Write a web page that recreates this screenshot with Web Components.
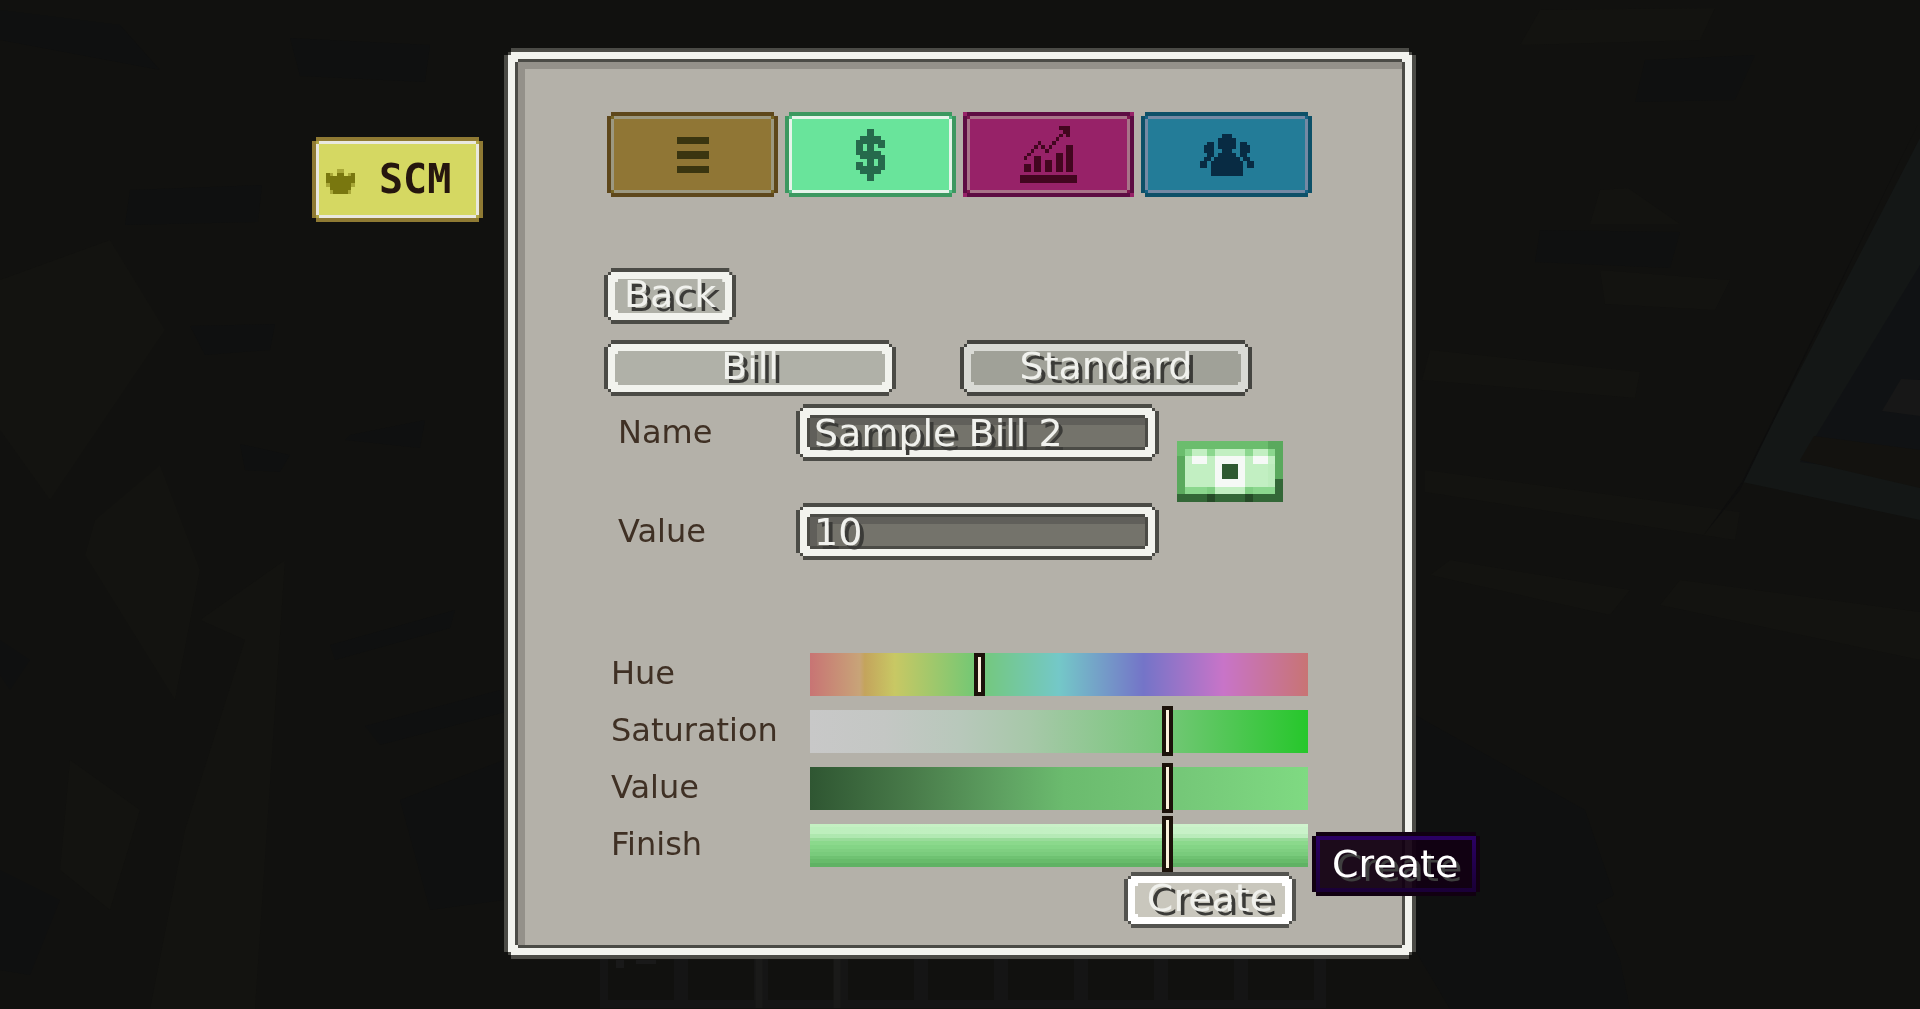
<!DOCTYPE html>
<html lang="en">
<head>
<meta charset="utf-8">
<title>SCM</title>
<style>
  html {
    min-height: 100%;
    background: #11110f;
  }
  body {
    margin: 0;
    overflow: hidden;
    font-family: "DejaVu Sans", sans-serif;
  }
</style>
</head>
<body>
<mint-screen></mint-screen>

<script>
(function() {
  // Rectangle with a square of n px cut from every corner
  const notch = (n) => `polygon(
    ${n}px 0, calc(100% - ${n}px) 0, calc(100% - ${n}px) ${n}px, 100% ${n}px,
    100% calc(100% - ${n}px), calc(100% - ${n}px) calc(100% - ${n}px), calc(100% - ${n}px) 100%, ${n}px 100%,
    ${n}px calc(100% - ${n}px), 0 calc(100% - ${n}px), 0 ${n}px, ${n}px ${n}px)`;

  // Same, but the corner goes down in two steps
  const stairs = `polygon(
    7px 0, calc(100% - 7px) 0, calc(100% - 7px) 4px, calc(100% - 4px) 4px, calc(100% - 4px) 7px, 100% 7px,
    100% calc(100% - 7px), calc(100% - 4px) calc(100% - 7px), calc(100% - 4px) calc(100% - 4px),
    calc(100% - 7px) calc(100% - 4px), calc(100% - 7px) 100%, 7px 100%,
    7px calc(100% - 4px), 4px calc(100% - 4px), 4px calc(100% - 7px), 0 calc(100% - 7px),
    0 7px, 4px 7px, 4px 4px, 7px 4px)`;

  // All layers share one grid cell and paint in source order
  const frameCss = `
    .frame { display: grid; }
    .frame > * { grid-area: 1 / 1; min-width: 0; z-index: 0; }
    .frame > .body { z-index: 1; }
    .edge { background: var(--edge, #4b4b46); clip-path: ${stairs}; }
    .rim { background: var(--rim, #f2f3ee); margin: 4px; }
    .line { background: var(--edge, #4b4b46); margin: 11px; clip-path: ${notch(3)}; }
    .face { background: var(--face, #b4b1a9); margin: 11px; clip-path: ${notch(3)}; }
    .well { background: var(--face, #b4b1a9); margin: 14px; box-shadow: inset 7px 7px 0 var(--shade, #94918a); }
    .rim { clip-path: ${notch(3)}; }
  `;

  // Bitmap rows to svg: each character is looked up in the palette
  function pixels(rows, width, height, palette) {
    let out = '';
    rows.forEach((row, y) => {
      for (let x = 0; x < row.length;) {
        const c = row[x];
        let end = x;
        while (end < row.length && row[end] === c) end++;
        if (palette[c]) {
          out += `<rect x="${x}" y="${y}" width="${end - x}" height="1" fill="${palette[c]}"/>`;
        }
        x = end;
      }
    });
    return `<svg width="${width}" height="${height}" viewBox="0 0 ${rows[0].length} ${rows.length}"
      preserveAspectRatio="none" shape-rendering="crispEdges" aria-hidden="true">${out}</svg>`;
  }

  const icons = {
    menu: pixels(['#', '.', '#', '.', '#'], 32, 36, { '#': '#3a3510' }),
    dollar: pixels([
      '...##...',
      '...##...',
      '.######.',
      '########',
      '##.##.##',
      '##.##...',
      '#######.',
      '.#######',
      '...##.##',
      '##.##.##',
      '########',
      '.######.',
      '...##...',
      '...##...'
    ], 29, 52, { '#': '#266a4c' }),
    chart: pixels([
      '...........###..',
      '............##..',
      '...........#.#..',
      '..........#.....',
      '.....#...#......',
      '....#.#.#....##.',
      '...#...#.....##.',
      '..#.......##.##.',
      '.#..##....##.##.',
      '....##.##.##.##.',
      '.##.##.##.##.##.',
      '.##.##.##.##.##.',
      '................',
      '################',
      '################'
    ], 57, 57, { '#': '#42061f' }),
    people: pixels([
      '......###......',
      '.....#####.....',
      '..##.#####.##..',
      '.###.#####.###.',
      '.###..###..###.',
      '..##.#####.##..',
      '.##.#######.##.',
      '##.#########.##',
      '##.#########.##',
      '...#########...',
      '...#########...'
    ], 54, 42, { '#': '#082b43' }),
    crown: pixels([
      '...oo...',
      '#o.##.o#',
      '########',
      '########',
      'o######o',
      '.######.',
      '.o####o.'
    ], 29, 25, { '#': '#79770f', 'o': '#a9a838' })
  };

  const billArt = pixels([
    'bbbbbbbbbbbbcc',
    'bdeedeeeedeedc',
    'cewwewwwwewwec',
    'ceeeewkkweeefc',
    'ceeeewkkweeefc',
    'ceeeewwwweeefg',
    'cdddaeeeeadddg',
    'gggghgggghgggg'
  ], 106, 61, {
    a: '#80cf83', b: '#6bbd6d', c: '#5aa95d', d: '#8bd78e', e: '#c2efc2',
    f: '#bcecbc', g: '#336737', h: '#254b27', w: '#f5f9f6', k: '#2f5a32'
  });

  class WorldBackdrop extends HTMLElement {
    constructor() {
      super();
      let slots = '';
      for (let i = 0; i < 9; i++) {
        slots += `<rect x="${608 + i * 80}" y="930" width="66" height="70"/>`;
      }
      this.attachShadow({ mode: 'open' }).innerHTML = `
        <style>
          :host { position: fixed; inset: 0; z-index: -1; }
          svg { display: block; width: 100%; height: 100%; }
        </style>
        <svg viewBox="0 0 1920 1009" preserveAspectRatio="none" aria-hidden="true">
          <rect width="1920" height="1009" fill="#11110f"/>
          <g fill="#0f1010">
            <path d="M0 10L120 25 160 70 0 40zM290 38L430 45 425 82 300 76zM130 190L262 185 258 222 125 225z"/>
            <path d="M190 326L275 324 270 350 205 355zM350 435L425 420 420 448 345 440zM240 444L290 455 280 472 245 470z"/>
            <path d="M330 645L455 610 450 628 335 660zM365 726L500 690 505 712 380 745zM400 800L504 760 504 900 430 910z"/>
            <path d="M0 640L30 660 10 690 0 675zM0 870L60 900 30 975 0 970z"/>
            <path d="M1645 60L1755 55 1735 100 1635 102zM1540 230L1680 232 1670 268 1535 262z"/>
            <path d="M1415 715L1585 810 1614 895 1596 905 1620 960 1630 1009 1450 1009 1415 950z"/>
          </g>
          <g fill="#131310">
            <path d="M95 520L160 465 200 570 175 700 85 555zM0 280L110 240 165 330 50 500 0 430z"/>
            <path d="M200 620L245 640 185 830 150 1009 255 1009 285 560zM70 760L140 810 110 910 60 870z"/>
            <path d="M1600 190L1628 188 1680 224 1590 224zM1430 350L1640 372 1635 398 1422 380zM1600 270L1730 280 1715 310 1605 304z"/>
            <path d="M1425 470L1740 512 1735 540 1425 492zM1450 560L1630 590 1610 615 1430 575zM1540 10L1715 8 1700 40 1520 45z"/>
            <path d="M1680 580L1920 612 1920 660 1660 605z"/>
          </g>
          <path fill="#141716" d="M1920 138L1742 482 1920 520z"/>
          <path fill="#101214" d="M1920 265L1800 462 1920 478z"/>
          <path fill="#171717" d="M1901 379L1920 380 1920 416 1882 411z"/>
          <path fill="#13120f" d="M1814 436L1920 450 1920 488 1800 460z"/>
          <path fill="#0e0e0e" d="M1918 124L1742 482 1703 536 1740 490z"/>
          <rect x="600" y="930" width="726" height="78" fill="#151515"/>
          <g fill="#11110f">${slots}</g>
          <path d="M759 959V1008M837 959V1008" stroke="#1a1a19" stroke-width="7"/>
          <path d="M616 960h8v8h-8zM636 960h20v4h-20z" fill="#191919"/>
        </svg>
      `;
    }
  }

  class MintTab extends HTMLElement {
    constructor() {
      super();
      this.attachShadow({ mode: 'open' }).innerHTML = `
        <style>
          ${frameCss}
          :host { display: block; }
          button {
            width: 100%;
            height: 85px;
            padding: 0;
            border: 0;
            background: var(--tip, transparent);
            font: bold 40px "DejaVu Sans Mono", monospace;
            color: #25160e;
            cursor: pointer;
          }
          .edge { clip-path: ${notch(4)}; }
          .corner { background: var(--corner); margin: 4px; }
          .face { margin: 7px; clip-path: none; }
          .body {
            display: flex;
            align-items: center;
            justify-content: center;
            gap: 24px;
          }
          :host([wide]) .body {
            justify-content: flex-start;
            padding: 0 14px 2px;
          }
          :host([wide]) svg { margin-top: 6px; }
          svg { display: block; flex: none; }
        </style>
        <button class="frame" type="button" aria-label="${this.getAttribute('label')}">
          <span class="edge"></span><span class="corner"></span><span class="rim"></span><span class="face"></span>
          <span class="body">${icons[this.getAttribute('icon')]}<slot></slot></span>
        </button>
      `;
    }
  }

  class MintButton extends HTMLElement {
    constructor() {
      super();
      this.attachShadow({ mode: 'open' }).innerHTML = `
        <style>
          ${frameCss}
          :host { display: block; }
          button {
            width: 100%;
            height: 56px;
            padding: 0;
            border: 0;
            background: none;
            font: 38px/48px "DejaVu Sans", sans-serif;
            color: #f0f1ed;
            text-shadow: 4px 4px 0 #3b3b38;
            cursor: pointer;
          }
          .body { padding: 2px 20px 6px; }
        </style>
        <button class="frame" type="button">
          <span class="edge"></span><span class="rim"></span><span class="face"></span>
          <span class="body"><slot></slot></span>
        </button>
      `;
    }
  }

  class MintField extends HTMLElement {
    constructor() {
      super();
      this.attachShadow({ mode: 'open' }).innerHTML = `
        <style>
          ${frameCss}
          :host {
            display: grid;
            grid-template-columns: 192px 1fr;
            align-items: center;
            --face: #74736b;
            --shade: #605f5a;
          }
          label {
            padding-left: 14px;
            padding-bottom: 2px;
            font-size: 32px;
            line-height: 40px;
            color: #3f3024;
          }
          .frame { height: 57px; }
          input {
            box-sizing: border-box;
            width: 100%;
            height: 100%;
            padding: 0 18px;
            border: 0;
            outline: 0;
            background: none;
            font: 38px/48px "DejaVu Sans", sans-serif;
            color: #f0f1ed;
            text-shadow: 4px 4px 0 #3b3b38;
          }
        </style>
        <label for="field">${this.getAttribute('label')}</label>
        <div class="frame">
          <span class="edge"></span><span class="rim"></span><span class="line"></span><span class="well"></span>
          <input class="body" id="field" type="text" value="${this.getAttribute('value')}">
        </div>
      `;
    }
  }

  class MintSlider extends HTMLElement {
    constructor() {
      super();
      this.attachShadow({ mode: 'open' }).innerHTML = `
        <style>
          :host {
            display: grid;
            grid-template-columns: 206px 1fr;
            align-items: center;
          }
          label {
            padding-left: 7px;
            padding-bottom: 3px;
            font-size: 32px;
            line-height: 40px;
            color: #3f3024;
          }
          input {
            -webkit-appearance: none;
            appearance: none;
            width: 100%;
            height: 43px;
            margin: 0;
            background: var(--track);
          }
          input::-webkit-slider-runnable-track { height: 43px; }
          input::-webkit-slider-thumb {
            -webkit-appearance: none;
            box-sizing: border-box;
            width: 11px;
            height: var(--thumb, 50px);
            margin-top: var(--lift, -4px);
            border: 4px solid #1c120a;
            border-radius: 0;
            background: #faf1dc;
          }
        </style>
        <label for="range">${this.getAttribute('label')}</label>
        <input id="range" type="range" min="0" max="487" value="${this.getAttribute('value')}">
      `;
    }
  }

  class MintTooltip extends HTMLElement {
    constructor() {
      super();
      this.attachShadow({ mode: 'open' }).innerHTML = `
        <style>
          :host {
            display: block;
            box-sizing: border-box;
            min-width: 160px;
            padding: 0 12px;
            border: 4px solid;
            border-image: linear-gradient(#2a0062, #1a0038) 1;
            background: rgba(18, 0, 18, 0.94);
            box-shadow: 0 -4px #110011, 0 4px #110011, -4px 0 #110011, 4px 0 #110011;
            font-size: 38px;
            line-height: 48px;
            color: #fff;
            text-shadow: 4px 4px 0 #3e3e3e;
          }
        </style>
        <slot></slot>
      `;
    }
  }

  class MintPanel extends HTMLElement {
    constructor() {
      super();
      this.attachShadow({ mode: 'open' }).innerHTML = `
        <style>
          ${frameCss}
          :host { display: block; }
          .body { padding: 64px 104px 31px 100px; }
        </style>
        <div class="frame">
          <span class="edge"></span><span class="rim"></span><span class="line"></span><span class="well"></span>
          <div class="body"><slot></slot></div>
        </div>
      `;
    }
  }

  class MintScreen extends HTMLElement {
    constructor() {
      super();
      this.attachShadow({ mode: 'open' }).innerHTML = `
        <style>
          :host { display: block; }
          main {
            display: grid;
            grid-template-columns: 1fr minmax(auto, 912px) 1fr;
            align-items: start;
            padding-top: 48px;
          }
          aside {
            display: flex;
            justify-content: flex-end;
            padding: 89px 21px 0 0;
          }
          aside mint-tab { width: 171px; }
          nav {
            display: grid;
            grid-template-columns: repeat(4, 1fr);
            gap: 7px;
            padding-left: 3px;
            margin-bottom: 71px;
          }
          .back { display: flex; margin-bottom: 16px; }
          .kind {
            display: grid;
            grid-template-columns: 1fr 1fr;
            gap: 64px;
            padding-right: 60px;
            margin-bottom: 8px;
          }
          .details {
            display: grid;
            grid-template-columns: 1fr auto;
            column-gap: 18px;
            padding-right: 29px;
            margin-bottom: 93px;
          }
          .fields { display: grid; gap: 42px; }
          .preview { margin-top: 37px; }
          .preview svg { display: block; }
          .sliders { display: grid; gap: 14px; padding-right: 4px; }
          .actions {
            display: flex;
            justify-content: flex-end;
            padding: 5px 16px 0 0;
          }
          .create { position: relative; min-width: 172px; }
          mint-tooltip {
            position: absolute;
            left: calc(100% + 20px);
            top: -36px;
            z-index: 2;
          }

          .scm { --edge: #8f7a33; --rim: #e9e8df; --corner: #b0a547; --face: #d5d862; }
          .list { --edge: #5e471b; --rim: #9c9880; --corner: #776524; --face: #907635; }
          .money { --edge: #3c9860; --rim: #e5f4ea; --corner: #54c087; --face: #69e49b; }
          .stats { --edge: #5d0d43; --rim: #a87489; --corner: #7d164f; --face: #972268; --tip: #972268; }
          .users { --edge: #0d5068; --rim: #7489a4; --corner: #176285; --face: #237c98; }
          .back mint-button, .bill { --face: #b0b1a8; }
          .standard { --edge: #454541; --rim: #d9dad5; --face: #a0a198; }
          .create mint-button { --edge: #53534f; --rim: #ffffff; --face: #c9c7bd; }

          .hue {
            --thumb: 43px;
            --lift: 0px;
            --track: linear-gradient(90deg, #c87474, #c8a478 10%, #c4a45c 11%, #c8c864 17%, #74c874 33%,
              #74c8c8 50%, #7474c8 67%, #c874c8 83%, #c87474);
          }
          .saturation {
            --track: linear-gradient(90deg, #c8c8c8, #c4c7c4 15%, #b8c8bb 30%, #a7c8a9 44%, #75c778 71%, #26c72b);
          }
          .brightness {
            --track: linear-gradient(90deg, #2f5632, #487a49 20%, #60a463 40%, #6bbb6e 51%, #74c677 72%, #7fda82);
          }
          .finish {
            --thumb: 56px;
            --lift: -8px;
            --track: linear-gradient(90deg, transparent, rgba(255, 255, 255, 0.2)) 0 0 / 100% 14px no-repeat,
              linear-gradient(#c4f0c2 0 3px, #bdefbd 3px 10px, #aee8af 10px 14px, #99dc9a 14px 17px,
              #8bd98c 17px 21px, #84d586 21px 25px, #7fcf81 25px 28px, #79cb7c 28px 32px,
              #6fc272 32px 35px, #68bb6b 35px 39px, #60b264 39px);
          }
        </style>

        <world-backdrop></world-backdrop>
        <main>
          <aside><mint-tab class="scm" icon="crown" label="SCM" wide>SCM</mint-tab></aside>
          <mint-panel>
            <nav>
              <mint-tab class="list" icon="menu" label="Menu"></mint-tab>
              <mint-tab class="money" icon="dollar" label="Money"></mint-tab>
              <mint-tab class="stats" icon="chart" label="Statistics"></mint-tab>
              <mint-tab class="users" icon="people" label="Members"></mint-tab>
            </nav>
            <div class="back"><mint-button>Back</mint-button></div>
            <div class="kind">
              <mint-button class="bill">Bill</mint-button>
              <mint-button class="standard">Standard</mint-button>
            </div>
            <div class="details">
              <div class="fields">
                <mint-field label="Name" value="Sample Bill 2"></mint-field>
                <mint-field label="Value" value="10"></mint-field>
              </div>
              <div class="preview">${billArt}</div>
            </div>
            <div class="sliders">
              <mint-slider class="hue" label="Hue" value="164"></mint-slider>
              <mint-slider class="saturation" label="Saturation" value="352"></mint-slider>
              <mint-slider class="brightness" label="Value" value="352"></mint-slider>
              <mint-slider class="finish" label="Finish" value="352"></mint-slider>
            </div>
            <div class="actions">
              <div class="create">
                <mint-button>Create</mint-button>
                <mint-tooltip role="tooltip">Create</mint-tooltip>
              </div>
            </div>
          </mint-panel>
        </main>
      `;
    }
  }

  customElements.define('world-backdrop', WorldBackdrop);
  customElements.define('mint-tab', MintTab);
  customElements.define('mint-button', MintButton);
  customElements.define('mint-field', MintField);
  customElements.define('mint-slider', MintSlider);
  customElements.define('mint-tooltip', MintTooltip);
  customElements.define('mint-panel', MintPanel);
  customElements.define('mint-screen', MintScreen);
})();
</script>
</body>
</html>
